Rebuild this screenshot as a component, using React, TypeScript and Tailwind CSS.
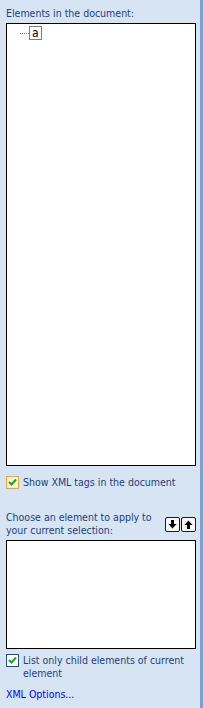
import React from "react";

function Check({ hover }: { hover?: boolean }) {
  return (
    <div
      className={
        "w-[13px] h-[13px] shrink-0 flex items-center justify-center border " +
        (hover ? "border-[#e8a53a] bg-[#fdf3cf]" : "border-[#1c5180] bg-white")
      }
    >
      <svg width="9" height="9" viewBox="0 0 9 9">
        <path d="M1 4 L3.5 6.5 L8 1.5" fill="none" stroke="#21a121" strokeWidth="2" />
      </svg>
    </div>
  );
}

function ArrowBtn({ dir }: { dir: "up" | "down" }) {
  return (
    <div className="w-[15px] h-[15px] border border-[#1b1b1b] rounded-[2px] bg-[#f6f6f6] flex items-center justify-center">
      <svg width="9" height="9" viewBox="0 0 9 9">
        {dir === "down" ? (
          <path d="M3 0 H6 V4 H8.5 L4.5 8.5 L0.5 4 H3 Z" fill="#000" />
        ) : (
          <path d="M3 9 H6 V5 H8.5 L4.5 0.5 L0.5 5 H3 Z" fill="#000" />
        )}
      </svg>
    </div>
  );
}

export default function App() {
  return (
    <div
      className="w-[203px] h-[708px] flex bg-[#d6e4f3] text-[10.5px] leading-[13px] text-[#1d3f7e]"
      style={{ fontFamily: '"DejaVu Sans Condensed", "DejaVu Sans", sans-serif' }}
    >
      <div className="w-[200px] flex flex-col pl-[6px] pt-[7px]">
        {/* Elements list */}
        <p className="mb-[3px]">Elements in the document:</p>
        <div className="w-[190px] h-[443px] border border-black bg-white pt-[2px] pl-[13px]">
          <div className="flex items-center">
            <div className="w-[9px] border-t border-dotted border-[#808080]" />
            <div className="h-[14px] px-[2px] border border-[#7f7f7f] text-black text-[12px] leading-[12px] flex items-center">
              a
            </div>
          </div>
        </div>

        <label className="flex items-center gap-[4px] mt-[10px]">
          <Check hover />
          <span>Show XML tags in the document</span>
        </label>

        {/* Apply element */}
        <div className="flex items-start mt-[22px] w-[190px]">
          <p className="flex-1">
            Choose an element to apply to
            <br />
            your current selection:
          </p>
          <div className="flex gap-[1px] mt-[6px]">
            <ArrowBtn dir="down" />
            <ArrowBtn dir="up" />
          </div>
        </div>
        <div className="w-[190px] h-[109px] border border-black bg-white mt-[3px]" />

        <label className="flex items-start gap-[4px] mt-[5px]">
          <Check />
          <span>
            List only child elements of current
            <br />
            element
          </span>
        </label>

        <a className="mt-[8px] text-[#0000ff]">XML Options...</a>
      </div>
      <div className="w-[3px] bg-[#7d9fd1]" />
    </div>
  );
}
